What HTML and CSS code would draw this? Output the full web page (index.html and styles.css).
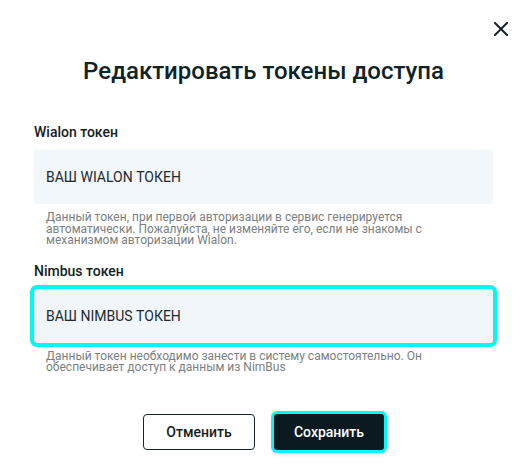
FILE: index.html
```html
<!DOCTYPE html>
<html lang="ru">
<head>
<meta charset="utf-8">
<link rel="stylesheet" href="styles.css">
</head>
<body>
<div class="modal">
  <button class="close" aria-label="Закрыть">
    <svg width="14" height="14" viewBox="0 0 14 14"><path d="M1 1L13 13M13 1L1 13" stroke="#132328" stroke-width="2" stroke-linecap="square"/></svg>
  </button>
  <h1 class="title">Редактировать токены доступа</h1>
  <div class="field">
    <label class="label">Wialon токен</label>
    <div class="input">ВАШ WIALON ТОКЕН</div>
    <p class="help">Данный токен, при первой авторизации в сервис генерируется автоматически. Пожалуйста, не изменяйте его, если не знакомы с механизмом авторизации Wialon.</p>
  </div>
  <div class="field">
    <label class="label">Nimbus токен</label>
    <div class="input focused">ВАШ NIMBUS ТОКЕН</div>
    <p class="help">Данный токен необходимо занести в систему самостоятельно. Он обеспечивает доступ к данным из NimBus</p>
  </div>
  <div class="actions">
    <button class="btn btn-cancel">Отменить</button>
    <button class="btn btn-save">Сохранить</button>
  </div>
</div>
</body>
</html>
```
FILE: styles.css
```css
* { box-sizing: border-box; }
body {
  margin: 0;
  background: #fff;
  font-family: Roboto, "Liberation Sans", sans-serif;
  color: #132328;
}
.modal {
  position: relative;
  width: 525px;
  height: 471px;
  padding: 56px 32px 0 34px;
  display: flex;
  flex-direction: column;
}
.close {
  position: absolute;
  top: 21px;
  right: 16px;
  width: 16px;
  height: 16px;
  padding: 0;
  border: 0;
  background: none;
  display: flex;
  align-items: center;
  justify-content: center;
}
.title {
  margin: 0 0 36px;
  font-size: 24px;
  line-height: 30px;
  font-weight: 500;
  text-align: center;
  color: #0f2226;
}
.field {
  display: flex;
  flex-direction: column;
  margin-bottom: 14px;
}
.label {
  font-size: 14px;
  line-height: 20px;
  font-weight: 500;
  color: #151d20;
  margin-bottom: 8px;
}
.input {
  height: 54px;
  background: #f1f7fa;
  border-radius: 2px;
  padding: 0 12px;
  display: flex;
  align-items: center;
  font-size: 14px;
  color: #222a2d;
}
.input.focused {
  box-shadow: 0 0 0 4px #00f8f8;
  border-radius: 3px;
  background: #f1f6fa;
}
.help {
  margin: 8px 0 0;
  padding: 0 40px 0 12px;
  font-size: 12px;
  line-height: 11.5px;
  color: #7b7f81;
}
.actions {
  display: flex;
  justify-content: center;
  gap: 19px;
  margin-top: 26px;
}
.btn {
  height: 36px;
  border-radius: 4px;
  font-family: Roboto, "Liberation Sans", sans-serif;
  font-size: 14px;
  font-weight: 500;
  padding: 0;
}
.btn-cancel {
  width: 112px;
  background: #fff;
  border: 1px solid #1a2428;
  color: #151d20;
}
.btn-save {
  width: 110px;
  background: #0b1a20;
  border: 0;
  color: #fff;
  box-shadow: 0 0 0 3px #00f8f8, 0 3px 5px rgba(0,0,0,0.25);
  border-radius: 3px;
}
```
